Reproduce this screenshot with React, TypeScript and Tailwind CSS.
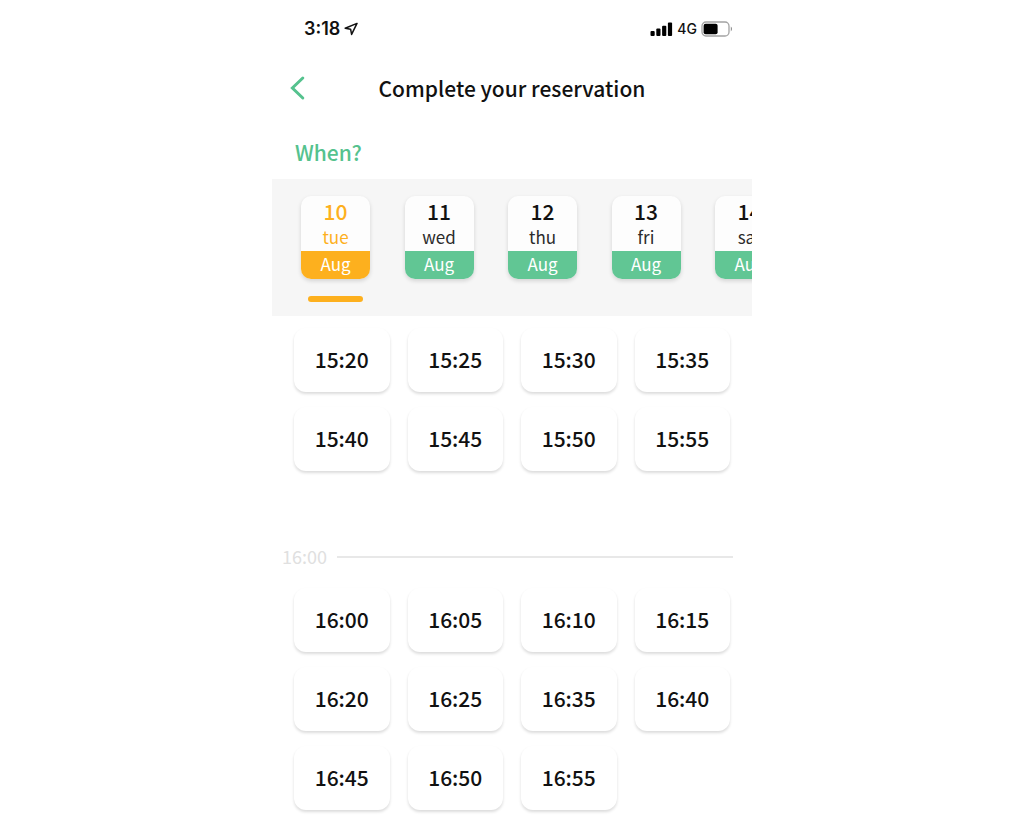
import { useState } from "react";

interface Day {
    date: number;
    weekday: string;
    month: string;
}

const days: Day[] = [
    { date: 10, weekday: "tue", month: "Aug" },
    { date: 11, weekday: "wed", month: "Aug" },
    { date: 12, weekday: "thu", month: "Aug" },
    { date: 13, weekday: "fri", month: "Aug" },
    { date: 14, weekday: "sat", month: "Aug" },
];

const earlySlots = ["15:20", "15:25", "15:30", "15:35", "15:40", "15:45", "15:50", "15:55"];

const lateSlots = [
    "16:00", "16:05", "16:10", "16:15", "16:20", "16:25",
    "16:35", "16:40", "16:45", "16:50", "16:55",
];

function StatusBar() {
    return (
        <div className="flex h-[58px] items-center justify-between pl-8 pr-[19px] font-['Inter',sans-serif] text-[#111111]">
            <div className="flex items-center gap-1">
                <span className="text-[18px] leading-6 font-semibold">3:18</span>
                <svg width="14" height="14" viewBox="0 0 14 14" fill="none" stroke="currentColor" strokeWidth="1.5" strokeLinejoin="round">
                    <path d="M13 1.4 1.2 6.2 6.6 7.2 7.6 12.4Z" />
                </svg>
            </div>
            <div className="flex items-center gap-1">
                <svg width="23" height="14" viewBox="0 0 23 14" fill="#000">
                    <rect x="0.5" y="9" width="4.2" height="5" rx="1" />
                    <rect x="6.3" y="6.5" width="4.2" height="7.5" rx="1" />
                    <rect x="12.1" y="3.7" width="4.2" height="10.3" rx="1" />
                    <rect x="17.9" y="0.6" width="4.2" height="13.4" rx="1" />
                </svg>
                <span className="text-[14px] leading-6 font-medium">4G</span>
                <svg width="32" height="16" viewBox="0 0 32 16" fill="none">
                    <rect x="1" y="1" width="27" height="14" rx="4" stroke="#a3a3a3" strokeWidth="1.3" />
                    <rect x="2.6" y="2.8" width="14" height="10.4" rx="2" fill="#000" />
                    <path d="M29.8 5.6c1.6.8 1.6 4 0 4.8Z" fill="#8a8a8a" />
                </svg>
            </div>
        </div>
    );
}

function DayCard({ day, selected, onSelect }: { day: Day; selected: boolean; onSelect: () => void }) {
    return (
        <button
            type="button"
            aria-pressed={selected}
            onClick={onSelect}
            className="flex shrink-0 flex-col items-center"
        >
            <span className="flex w-[69px] flex-col overflow-hidden rounded-[10px] bg-[#fdfdfd] shadow-[0_2px_4px_rgba(0,0,0,0.14)]">
                <span className={`pt-[3px] text-[21px] leading-6 font-medium ${selected ? "text-[#fdb01e]" : "text-[#111111]"}`}>
                    {day.date}
                </span>
                <span className={`py-[2px] text-[17px] leading-6 ${selected ? "text-[#fdb01e]" : "text-[#2b2b2b]"}`}>
                    {day.weekday}
                </span>
                <span className={`pb-[2px] text-[17px] leading-[26px] text-white ${selected ? "bg-[#fdb01e]" : "bg-[#61c694]"}`}>
                    {day.month}
                </span>
            </span>
            {selected && <span className="mt-[17px] h-[6px] w-[55px] rounded-full bg-[#fdb01e]" />}
        </button>
    );
}

function SlotGrid({ slots }: { slots: string[] }) {
    return (
        <div className="grid grid-cols-4 gap-x-[18px] gap-y-[15px] px-[22px]">
            {slots.map(slot => (
                <button
                    key={slot}
                    type="button"
                    className="h-16 rounded-[12px] bg-white pb-[3px] text-[21px] leading-6 font-medium text-[#111111] shadow-[0_2px_3px_rgba(0,0,0,0.14)]"
                >
                    {slot}
                </button>
            ))}
        </div>
    );
}

export default function App() {
    const [selectedDate, setSelectedDate] = useState(10);

    return (
        <div className="min-h-screen bg-white">
            <main className="mx-auto w-full max-w-[480px] pb-7 font-['Noto_Sans_CJK_JP','Noto_Sans_CJK_SC',sans-serif]">
                <StatusBar />

                <header className="grid h-[60px] grid-cols-[1fr_auto_1fr] items-center px-4">
                    <button type="button" aria-label="Back" className="justify-self-start text-[#55c28e]">
                        <svg width="20" height="26" viewBox="0 0 20 26" fill="none" stroke="currentColor" strokeWidth="3" strokeLinecap="round">
                            <path d="M14.8 3 4.4 13 14.8 23" />
                        </svg>
                    </button>
                    <h1 className="text-[21px] leading-8 font-medium text-[#111111]">Complete your reservation</h1>
                </header>

                <h2 className="px-[23px] pt-[18px] pb-[11px] text-[21px] leading-8 font-medium text-[#55c28e]">When?</h2>

                <div className="h-[137px] overflow-hidden bg-[#f6f6f6] pt-[17px] pl-[29px]">
                    <div className="flex w-[483px] items-start justify-between">
                        {days.map(day => (
                            <DayCard
                                key={day.date}
                                day={day}
                                selected={day.date === selectedDate}
                                onSelect={() => setSelectedDate(day.date)}
                            />
                        ))}
                    </div>
                </div>

                {/* Time slots */}
                <section className="pt-3">
                    <SlotGrid slots={earlySlots} />
                </section>

                <section className="pt-[74px]">
                    <div className="flex items-center gap-[10px] pb-[19px] pl-[10px] pr-[19px]">
                        <h3 className="pb-[2px] text-[18px] leading-[22px] text-[#e0e0e0]">16:00</h3>
                        <div className="h-[2px] flex-1 bg-[#e8e8e8]" />
                    </div>
                    <SlotGrid slots={lateSlots} />
                </section>
            </main>
        </div>
    );
}
